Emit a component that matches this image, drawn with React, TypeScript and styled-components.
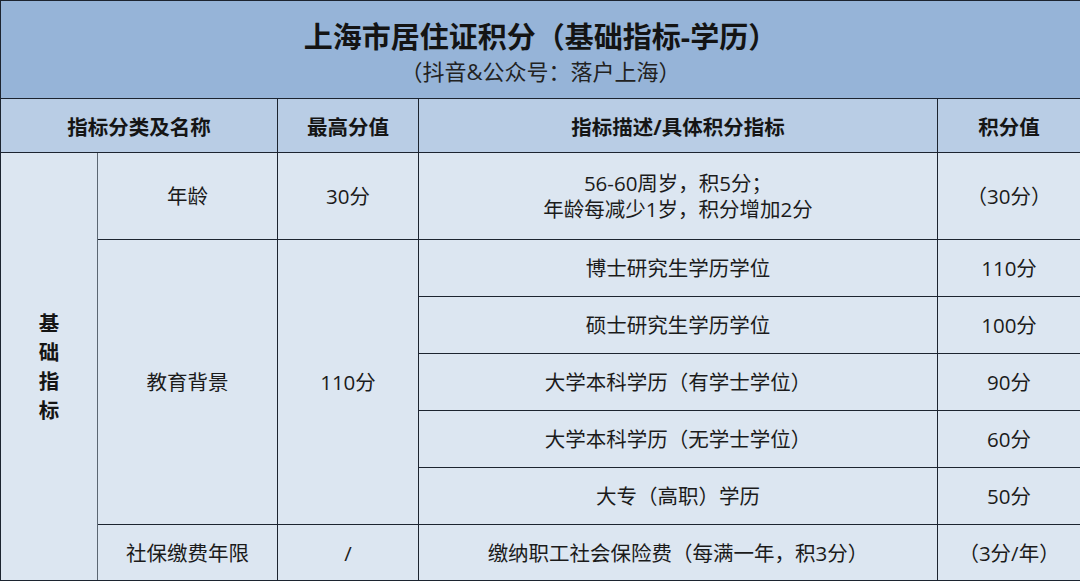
import styled, { createGlobalStyle } from "styled-components";

const GlobalStyle = createGlobalStyle`
  html, body {
    margin: 0;
    padding: 0;
    background: #ffffff;
  }
  body {
    font-family: "Open Sans", "Noto Sans CJK SC", sans-serif;
    color: #1b1b1b;
  }
`;

const Sheet = styled.table`
  width: 1080px;
  border-collapse: collapse;
  table-layout: fixed;
  border: 1px solid #1c2430;
`;

const TitleCell = styled.td`
  height: 98px;
  padding: 17px 0 0;
  box-sizing: border-box;
  vertical-align: top;
  text-align: center;
  background: #96b4d8;
  border: 1px solid #1c2430;
`;

const Title = styled.div`
  font-size: 29px;
  font-weight: 700;
  line-height: 38px;
  color: #141414;
`;

const Subtitle = styled.div`
  font-size: 22px;
  line-height: 30px;
  color: #222;
`;

const HeadCell = styled.th`
  height: 53px;
  padding: 0;
  font-size: 20.5px;
  font-weight: 700;
  text-align: center;
  background: #b9cde5;
  border: 1px solid #1c2430;
  color: #151515;
`;

const Cell = styled.td<{ $h?: number; $soft?: boolean }>`
  height: ${(p) => (p.$h ? `${p.$h}px` : "auto")};
  padding: 0;
  font-size: 20.5px;
  line-height: 26px;
  text-align: center;
  vertical-align: middle;
  background: #dce6f1;
  border: 1px solid #1c2430;
  border-right-color: ${(p) => (p.$soft ? "#5b6672" : "#1c2430")};
`;

const Category = styled.div`
  width: 22px;
  margin: 0 auto;
  font-size: 20.5px;
  font-weight: 700;
  line-height: 29px;
  color: #151515;
`;

const eduRows = [
  ["博士研究生学历学位", "110分"],
  ["硕士研究生学历学位", "100分"],
  ["大学本科学历（有学士学位）", "90分"],
  ["大学本科学历（无学士学位）", "60分"],
  ["大专（高职）学历", "50分"],
];

const App = () => {
  return (
    <>
      <GlobalStyle />
      <Sheet>
        <colgroup>
          <col style={{ width: 97 }} />
          <col style={{ width: 180 }} />
          <col style={{ width: 141 }} />
          <col style={{ width: 519 }} />
          <col style={{ width: 143 }} />
        </colgroup>
        <thead>
          <tr>
            <TitleCell colSpan={5}>
              <Title>上海市居住证积分（基础指标-学历）</Title>
              <Subtitle>（抖音&amp;公众号：落户上海）</Subtitle>
            </TitleCell>
          </tr>
          <tr>
            <HeadCell colSpan={2}>指标分类及名称</HeadCell>
            <HeadCell>最高分值</HeadCell>
            <HeadCell>指标描述/具体积分指标</HeadCell>
            <HeadCell>积分值</HeadCell>
          </tr>
        </thead>
        <tbody>
          <tr>
            <Cell rowSpan={7} $soft>
              <Category>基础指标</Category>
            </Cell>
            <Cell $h={86}>年龄</Cell>
            <Cell>30分</Cell>
            <Cell>
              56-60周岁，积5分；
              <br />
              年龄每减少1岁，积分增加2分
            </Cell>
            <Cell>（30分）</Cell>
          </tr>
          {eduRows.map(([desc, score], i) => (
            <tr key={desc}>
              {i === 0 && (
                <>
                  <Cell rowSpan={5}>教育背景</Cell>
                  <Cell rowSpan={5}>110分</Cell>
                </>
              )}
              <Cell $h={56}>{desc}</Cell>
              <Cell>{score}</Cell>
            </tr>
          ))}
          <tr>
            <Cell $h={55}>社保缴费年限</Cell>
            <Cell>/</Cell>
            <Cell>缴纳职工社会保险费（每满一年，积3分）</Cell>
            <Cell>（3分/年）</Cell>
          </tr>
        </tbody>
      </Sheet>
    </>
  );
};

export default App;
